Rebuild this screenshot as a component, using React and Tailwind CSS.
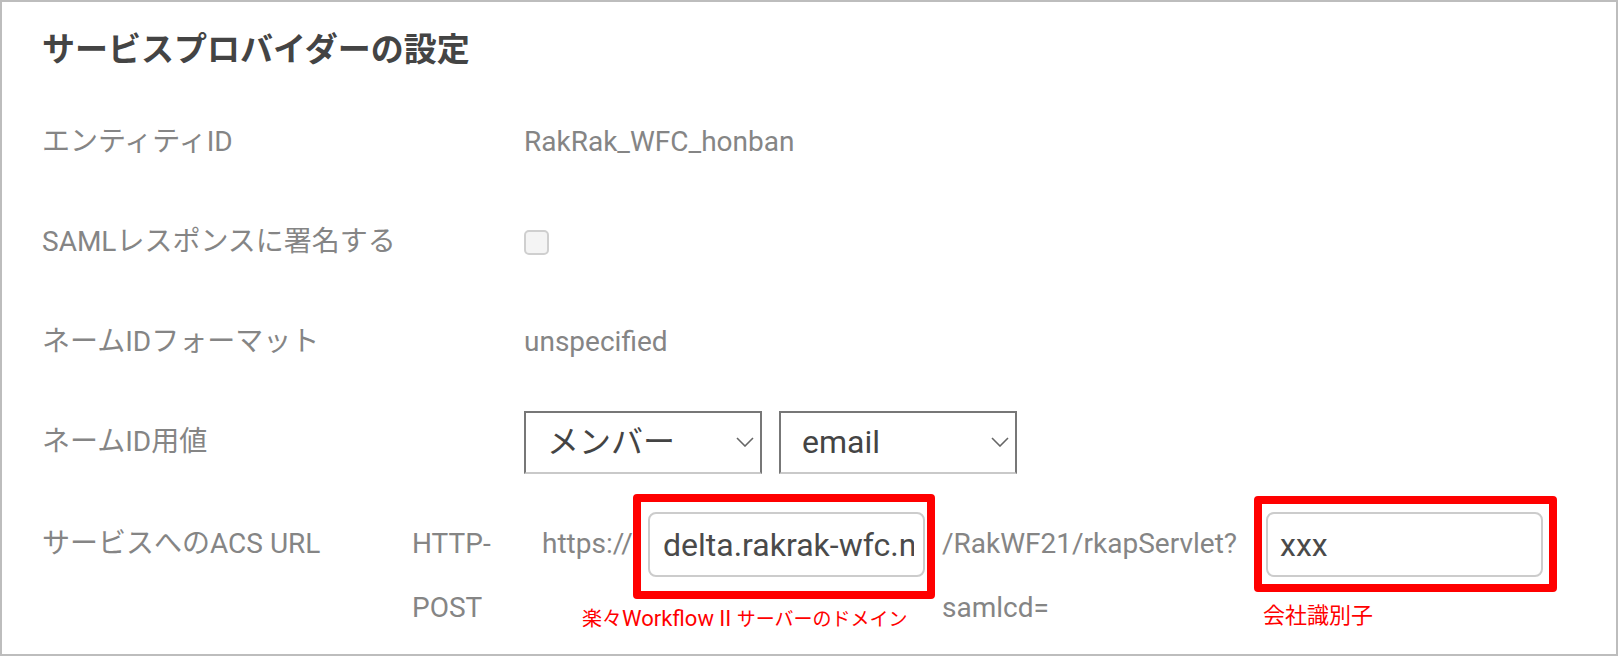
import React from "react";

function Chevron() {
  return (
    <svg width="18" height="10" viewBox="0 0 18 10" className="shrink-0">
      <polyline points="1,1 9,9 17,1" fill="none" stroke="#666" strokeWidth="1.6" />
    </svg>
  );
}

function Select({ label }) {
  return (
    <div className="flex h-[63px] w-[238px] items-center justify-between border-2 border-[#777] border-b-[#c9c9c9] bg-white pl-[21px] pr-[6px] text-[32px] leading-none text-[#444]">
      <span>{label}</span>
      <Chevron />
    </div>
  );
}

function Row({ label, children }) {
  return (
    <div className="flex h-[100px] items-center">
      <div className="w-[482px] shrink-0 text-[28px] text-[#858585]">{label}</div>
      <div className="flex items-center gap-[17px] text-[28px] text-[#858585]">{children}</div>
    </div>
  );
}

export default function App() {
  return (
    <div className="h-[656px] w-[1618px] overflow-hidden border-2 border-[#bdbdbd] bg-white pl-[40px] pt-[24px] font-['Roboto','Noto_Sans_CJK_JP',sans-serif]">
      <h1 className="h-[48px] text-[33px] font-bold leading-[48px] text-[#444]">サービスプロバイダーの設定</h1>
      <div className="mt-[18px]">
        <Row label="エンティティID">RakRak_WFC_honban</Row>
        <Row label="SAMLレスポンスに署名する">
          <div className="h-[25px] w-[25px] rounded-[5px] border-2 border-[#cfcfcf] bg-[#f4f4f4]" />
        </Row>
        <Row label="ネームIDフォーマット">unspecified</Row>
        <Row label="ネームID用値">
          <Select label="メンバー" />
          <Select label="email" />
        </Row>
      </div>
      <div className="mt-[20px] flex items-start text-[28px] leading-[64px] text-[#858585]">
        <div className="w-[370px] shrink-0">サービスへのACS URL</div>
        <div className="w-[130px] shrink-0">
          HTTP-
          <br />
          POST
        </div>
        <div className="w-[106px] shrink-0">https://</div>
        <div className="relative shrink-0">
          <input
            readOnly
            defaultValue="delta.rakrak-wfc.net"
            className="block h-[65px] w-[277px] rounded-[8px] border-2 border-[#cccccc] bg-white pl-[13px] pr-[9px] text-[32px] text-[#4a4a4a] outline-none"
          />
          <div className="absolute left-[-15px] top-[-18px] h-[105px] w-[302px] rounded-[4px] border-[8px] border-[#ff0000]" />
          <div className="absolute left-[-66px] top-[91px] h-[28px] whitespace-pre leading-[28px] text-[#ff0000]">
            <span className="text-[20px]">楽々</span>
            <span className="text-[22px]">{"Workflow II "}</span>
            <span className="text-[19px]">サーバーのドメイン</span>
          </div>
        </div>
        <div className="ml-[17px] w-[324px] shrink-0">
          /RakWF21/rkapServlet?
          <br />
          samlcd=
        </div>
        <div className="relative shrink-0">
          <input
            readOnly
            defaultValue="xxx"
            className="block h-[65px] w-[277px] rounded-[8px] border-2 border-[#cccccc] bg-white pl-[12px] pr-[12px] text-[32px] text-[#4a4a4a] outline-none"
          />
          <div className="absolute left-[-12px] top-[-16px] h-[96px] w-[303px] rounded-[4px] border-[8px] border-[#ff0000]" />
          <div className="absolute left-[-3px] top-[90px] h-[28px] whitespace-nowrap text-[22px] leading-[28px] text-[#ff0000]">
            会社識別子
          </div>
        </div>
      </div>
    </div>
  );
}
